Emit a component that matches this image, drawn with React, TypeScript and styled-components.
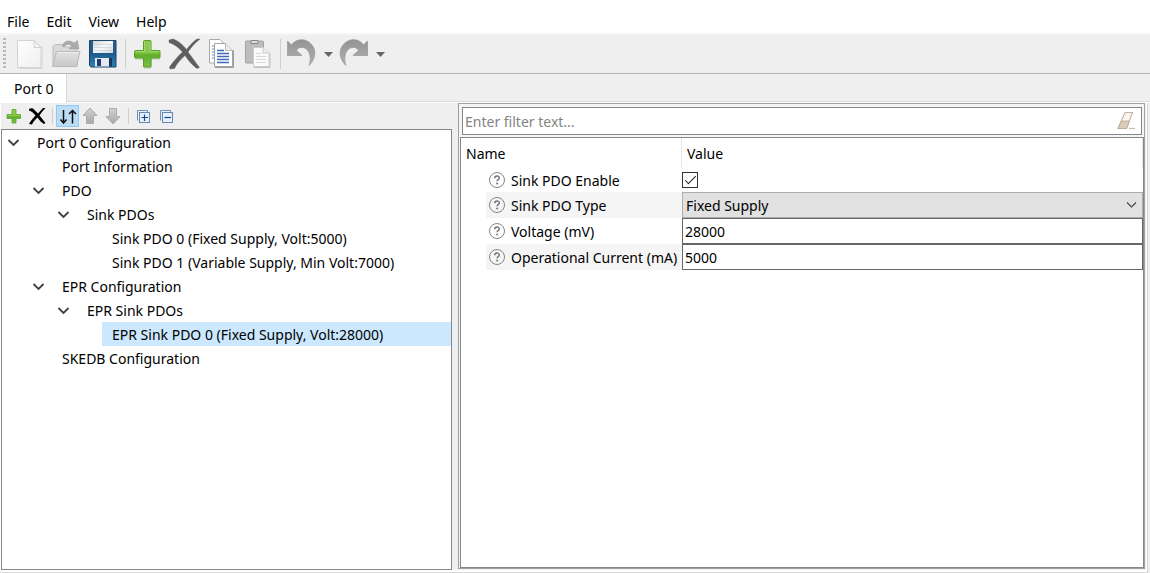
import React, { useState } from "react";
import styled, { createGlobalStyle, css } from "styled-components";

const Global = createGlobalStyle`
  *, *::before, *::after { box-sizing: border-box; }
  body { margin: 0; background: #f0f0f0; }
  body, button, input, select {
    font-family: "Noto Sans", "Open Sans", sans-serif;
    font-size: 14px;
    color: #000;
  }
  button { border: 0; padding: 0; background: none; }
`;

const Window = styled.div`
  display: flex;
  flex-direction: column;
  min-height: 100vh;
  background: #efefef;
`;

const MenuBar = styled.nav`
  display: flex;
  align-items: flex-end;
  height: 35px;
  padding-bottom: 1px;
  background: #fff;
  border-bottom: 2px solid #f6f6f6;
`;

const MenuItem = styled.button`
  height: 20px;
  padding: 0 10px 0 7px;
  line-height: 20px;
`;

const MainToolbar = styled.div`
  display: flex;
  align-items: center;
  height: 39px;
  border-bottom: 1px solid #b4b4b4;
`;

const Grip = styled.div`
  width: 3px;
  height: 32px;
  margin: 0 5px 0 3px;
  background: repeating-linear-gradient(#b9b9b9 0 2px, transparent 2px 4px);
`;

const Separator = styled.div<{ $small?: boolean }>`
  width: 1px;
  height: ${(p) => (p.$small ? 16 : 30)}px;
  margin: 0 3px;
  background: #cfcfcf;
`;

const ToolButton = styled.button<{ $narrow?: boolean }>`
  width: ${(p) => (p.$narrow ? 15 : 37)}px;
  height: 32px;
  svg { display: block; }
`;

const TabStrip = styled.div`
  display: flex;
  height: 29px;
  border-bottom: 1px solid #fff;
  box-shadow: inset 0 -1px #d9d9d9;
`;

const Tab = styled.button`
  height: 29px;
  padding: 0 13px 0 14px;
  background: #fff;
  border-right: 1px solid #d9d9d9;
`;

const Workspace = styled.main`
  display: flex;
  flex: 1;
  gap: 6px;
  margin-right: 2px;
  padding-right: 2px;
  border-right: 1px solid #d9d9d9;
  border-bottom: 1px solid #d9d9d9;
  box-shadow: inset 0 -2px #fff, inset -1px 0 #fff;
`;

const TreePane = styled.section`
  display: flex;
  flex-direction: column;
  flex: 0 1 452px;
  min-width: 200px;
  padding-bottom: 2px;
  border-left: 1px solid #fff;
`;

const TreeToolbar = styled.div`
  display: flex;
  align-items: center;
  height: 26px;
  padding-left: 2px;
`;

const SmallButton = styled.button<{ $active?: boolean }>`
  width: 23px;
  height: 22px;
  svg { display: block; }
  ${(p) => p.$active && css`
    background: #bcdcf4;
    box-shadow: inset 0 0 0 1px #90c8f6;
  `}
`;

const Tree = styled.ul`
  flex: 1;
  margin: 0;
  padding: 0;
  list-style: none;
  background: #fff;
  border: 1px solid #828790;
`;

const TreeRow = styled.li<{ $level: number }>`
  display: flex;
  height: 24px;
  padding-left: ${(p) => p.$level * 25}px;
`;

const Expander = styled.button`
  width: 25px;
  height: 24px;
  flex: none;
  svg { display: block; }
`;

const Leaf = styled.span`
  width: 25px;
  flex: none;
`;

const TreeLabel = styled.button<{ $selected: boolean }>`
  flex: 1;
  min-width: 0;
  padding-left: 10px;
  padding-top: 1px;
  text-align: left;
  white-space: nowrap;
  overflow: hidden;
  background: ${(p) => (p.$selected ? "#cce8ff" : "transparent")};
`;

const DetailPane = styled.section`
  display: flex;
  flex-direction: column;
  flex: 1;
  min-width: 0;
  margin-bottom: 3px;
  padding: 3px 0 0 1px;
  background: #f4f4f4;
  border: 1px solid #a0a0a0;
`;

const FilterBox = styled.div`
  display: flex;
  align-items: center;
  height: 28px;
  margin: 0 2px 2px;
  padding-right: 2px;
  background: #fff;
  border: 1px solid #828790;
`;

const FilterInput = styled.input`
  flex: 1;
  min-width: 0;
  height: 24px;
  padding: 0 2px;
  border: 0;
  outline: 0;
  background: transparent;
  &::placeholder { color: #838383; opacity: 1; }
`;

const ClearButton = styled.button`
  width: 24px;
  height: 24px;
  svg { display: block; }
`;

const PropertyArea = styled.div`
  flex: 1;
  background: #fff;
  border: 1px solid #828790;
`;

const PropertyTable = styled.table`
  width: 100%;
  table-layout: fixed;
  border-collapse: separate;
  border-spacing: 0;
`;

const HeadCell = styled.th`
  height: 30px;
  padding: 0 5px;
  font-weight: 400;
  text-align: left;
  border-right: 1px solid #e5e5e5;
  &:first-child { width: 221px; }
`;

const PropertyRow = styled.tr<{ $short?: boolean }>`
  height: ${(p) => (p.$short ? 24 : 26)}px;
`;

const NameCell = styled.td`
  padding: 0 0 0 25px;
`;

const NameBox = styled.div<{ $shaded?: boolean; $short?: boolean }>`
  display: flex;
  align-items: center;
  gap: 5px;
  height: ${(p) => (p.$short ? 24 : 26)}px;
  padding-left: 2px;
  white-space: nowrap;
  background: ${(p) => (p.$shaded ? "#f5f5f5" : "#fff")};
  svg { flex: none; }
`;

const ValueCell = styled.td`
  padding: 0;
`;

const CheckBox = styled.input`
  display: grid;
  place-items: center;
  appearance: none;
  width: 16px;
  height: 16px;
  margin: 0;
  border: 1px solid #333;
  background: #fff;
  &:checked::after {
    content: "";
    width: 11px;
    height: 5px;
    margin-top: -3px;
    border: solid #222;
    border-width: 0 0 1px 1px;
    transform: rotate(-45deg);
  }
`;

const SelectBox = styled.div`
  display: grid;
  align-items: center;
  > * { grid-area: 1 / 1; }
  svg { justify-self: end; margin-right: 6px; pointer-events: none; }
`;

const Select = styled.select`
  appearance: none;
  width: 100%;
  height: 26px;
  padding: 0 3px;
  border: 1px solid #adadad;
  border-radius: 0;
  background: #e1e1e1;
`;

const ValueInput = styled.input`
  display: block;
  width: 100%;
  height: 26px;
  padding: 0 2px;
  border: 1px solid #666;
  border-radius: 0;
  background: #fff;
`;

const Big = ({ children }: { children: React.ReactNode }) => (
  <svg width="37" height="32" viewBox="0 0 37 32" fill="none">{children}</svg>
);
const Small = ({ children }: { children: React.ReactNode }) => (
  <svg width="23" height="22" viewBox="0 0 23 22" fill="none">{children}</svg>
);

const GradientDefs = styled.svg`
  display: block;
`;

const Gradients = () => (
  <GradientDefs width="0" height="0" aria-hidden="true">
    <defs>
      <linearGradient id="paper" x1="0" y1="0" x2="1" y2="1">
        <stop offset="0" stopColor="#fff" /><stop offset="1" stopColor="#efefef" />
      </linearGradient>
      <linearGradient id="folder" x1="0" y1="0" x2="0" y2="1">
        <stop offset="0" stopColor="#e2e2e2" /><stop offset="1" stopColor="#c8c8c8" />
      </linearGradient>
      <linearGradient id="disk" x1="0" y1="0" x2="0" y2="1">
        <stop offset="0" stopColor="#2b5f8c" /><stop offset=".5" stopColor="#1e5a8c" /><stop offset="1" stopColor="#2d83b8" />
      </linearGradient>
      <linearGradient id="label" x1="0" y1="0" x2="1" y2="1">
        <stop offset="0" stopColor="#cfd5d9" /><stop offset=".5" stopColor="#f6f8f8" /><stop offset="1" stopColor="#d2d8dc" />
      </linearGradient>
      <linearGradient id="green" x1="0" y1="0" x2="0" y2="1">
        <stop offset="0" stopColor="#8ecb52" /><stop offset=".45" stopColor="#86c648" /><stop offset=".55" stopColor="#5fae2c" /><stop offset="1" stopColor="#7cc142" />
      </linearGradient>
      <linearGradient id="grey" x1="0" y1="0" x2="0" y2="1">
        <stop offset="0" stopColor="#949494" /><stop offset="1" stopColor="#b2b2b2" />
      </linearGradient>
      <linearGradient id="arrow" x1="0" y1="0" x2="0" y2="1">
        <stop offset="0" stopColor="#d2d2d2" /><stop offset="1" stopColor="#a8a8a8" />
      </linearGradient>
    </defs>
  </GradientDefs>
);

const NewIcon = () => (
  <Big>
    <path d="M8 30.500H31V9" stroke="#d8d8d8" />
    <path d="M6.500 2.500H23L30 9.500V29.500H6.500Z" fill="url(#paper)" stroke="#d2d2d2" />
    <path d="M23 2.500V9.500H30Z" fill="#f4f4f4" stroke="#cfcfcf" />
  </Big>
);
const OpenIcon = () => (
  <Big>
    <path d="M5 28V8.500L7 6.500H14L16 9H29V28Z" fill="#dadada" stroke="#bcbcbc" />
    <path d="M14 8C16 2.500 22 1.500 26 5L29.500 2.500L31 11H21L24 8C21 5.500 18 6 16 9Z" fill="#ababab" stroke="#9c9c9c" strokeWidth=".5" />
    <path d="M4.500 28.500L8.500 13.500H32L28.500 28.500Z" fill="url(#folder)" stroke="#bababa" />
    <path d="M9.500 14.500H31" stroke="#eee" />
  </Big>
);
const SaveIcon = () => (
  <Big>
    <path d="M4.500 2.500H31V29H6L4.500 27.500Z" fill="url(#disk)" stroke="#1c456c" />
    <path d="M8 3H28V15H8Z" fill="url(#label)" />
    <path d="M9 6.500H27M9 9.500H27M9 12.500H27" stroke="#c8cfd3" strokeWidth=".7" />
    <path d="M10 20H24V28.500H10Z" fill="#e4e9ee" />
    <path d="M12 21H16V28H12Z" fill="#1d3d78" />
    <path d="M24 20H27V28.500H24Z" fill="#16375d" />
  </Big>
);
const AddIcon = () => (
  <Big>
    <path d="M6 21H15V30H22V21H31" stroke="#c3c3c3" />
    <path d="M14.500 3.500Q14.500 2.500 15.500 2.500H21Q22 2.500 22 3.500V12.500H30Q31 12.500 31 13.500V19Q31 20 30 20H22V28Q22 29 21 29H15.500Q14.500 29 14.500 28V20H6.500Q5.500 20 5.500 19V13.500Q5.500 12.500 6.500 12.500H14.500Z" fill="url(#green)" stroke="#52a022" />
    <path d="M15.500 13.500V4M21 4V13.500H29.500M7 13.500H15" stroke="#a9da78" strokeWidth=".8" />
  </Big>
);
const DeleteIcon = () => (
  <Big>
    <path d="M3 2L7 1C12 2.500 17 7 20.500 11.500C24 7 28 3 31 1H34C29 5 25 9.500 22 14C26 19 30 25 33.500 29.500L31 30.500C26 27 22 22 19 17.500C14 22 10.500 26 8.500 30.500L4 31L3.500 29C7 24 12 18 16.500 14C12 9 8 6 3 4.500Z" fill="#5e5e5e" stroke="#5e5e5e" strokeWidth=".4" />
  </Big>
);
const CopyIcon = () => (
  <Big>
    <path d="M6.500 1.500H17L22 6.500V25H6.500Z" fill="#fff" stroke="#aaa" />
    <path d="M9 8H12M9 11H12M9 14H12M9 17H12M9 20H12" stroke="#6788cc" />
    <path d="M12 29.500H30.500V12" stroke="#9d9d9d" />
    <path d="M11.500 5.500H22.500L29.500 12.500V28.500H11.500Z" fill="#fff" stroke="#a4a4a4" />
    <path d="M22.500 5.500V12.500H29.500" fill="#eee" stroke="#bbb" />
    <path d="M14 12.500H21M14 15.500H26M14 18.500H26M14 21.500H26M14 24.500H26" stroke="#4168bb" strokeWidth="1.300" />
  </Big>
);
const PasteIcon = () => (
  <Big>
    <rect x="5.500" y="3" width="18" height="22" rx="1" fill="#bdbdbd" stroke="#a3a3a3" />
    <path d="M11 2.500H18V5.500H11Z" fill="#ddd" stroke="#888" />
    <path d="M14 29.500H30V15" stroke="#c2c2c2" />
    <path d="M13.500 9.500H23L29 15V28.500H13.500Z" fill="#fafafa" stroke="#cacaca" />
    <path d="M23 9.500V15H29" fill="#eee" stroke="#ccc" />
    <path d="M16 15.500H21M16 18.500H26M16 21.500H26M16 24.500H26" stroke="#d8d8d8" />
  </Big>
);
const UNDO = "M4.500 3L8.500 7C12 1.500 19 .500 24 3C34 8 34 20 26 27.500C29 20 26.500 10.500 20 9.500C17 9 14.500 10 13.500 12.500L19 17.500H4.500Z";
const UndoIcon = () => (
  <Big><path transform="translate(-1 0)" d={UNDO} fill="url(#grey)" stroke="#939393" strokeWidth=".7" /></Big>
);
const RedoIcon = () => (
  <Big><path transform="translate(36 0) scale(-1 1)" d={UNDO} fill="url(#grey)" stroke="#939393" strokeWidth=".7" /></Big>
);
const DropIcon = () => (
  <svg width="15" height="32" viewBox="0 0 15 32"><path d="M3 14H12L7.500 19Z" fill="#666" /></svg>
);

const SmallAdd = () => (
  <Small><path d="M9 4.500H13V9.500H17.500V13.500H13V18H9V13.500H4V9.500H9Z" fill="url(#green)" stroke="#5ba62b" strokeWidth=".8" /></Small>
);
const SmallDelete = () => (
  <Small><path d="M3 4L6 3C8 4 10 6.500 12 8.500L17 3H19.500C17 5.500 15 8 13.500 10.500L19.500 18L18 19C15.500 17.500 13 15 11.500 12.500C9 15 7 17 6 19.500L3 19C5 15.500 7 13 9.500 10.500C7.500 8 5.500 6 3 5.500Z" fill="#000" /></Small>
);
const SortIcon = () => (
  <Small><path d="M7.500 5V18M4.500 14.500L7.500 18L10.500 14.500M16.500 18.500V6M13 9L16.500 5.500L20 9" stroke="#111" strokeWidth="1.500" /></Small>
);
const UpIcon = () => (
  <Small><path d="M11 3L18 10.500H14.500V18.500H7.500V10.500H4Z" fill="url(#arrow)" stroke="#acacac" /></Small>
);
const DownIcon = () => (
  <Small><path d="M11 19L18 11.500H14.500V3.500H7.500V11.500H4Z" fill="url(#arrow)" stroke="#acacac" /></Small>
);
const TreeBox = ({ plus }: { plus?: boolean }) => (
  <Small>
    <path d="M5.500 15.500V5.500H15.500V7" fill="#e5f0fb" stroke="#7191b8" />
    <rect x="7.500" y="7.500" width="10" height="10" fill="#e5f0fb" stroke="#6687af" />
    <path d={plus ? "M9.500 12.500H16M12.500 9.500V16" : "M9.500 12.500H16"} stroke="#12488f" strokeWidth="1.200" />
  </Small>
);
const Chevron = () => (
  <svg width="25" height="24" viewBox="0 0 25 24" fill="none">
    <path d="M6.500 10L11.500 15L16.500 10" stroke="#404040" strokeWidth="1.800" />
  </svg>
);
const HelpIcon = () => (
  <svg width="18" height="18" viewBox="0 0 18 18" fill="none">
    <circle cx="9" cy="9" r="7.500" stroke="#858585" />
    <path d="M6.700 7.200C6.700 4.200 11.400 4.300 11.300 7C11.200 8.700 9.100 8.500 9.100 10.300" stroke="#777" strokeWidth="1.500" />
    <circle cx="9.100" cy="12.600" r="1" fill="#777" />
  </svg>
);
const EraserIcon = () => (
  <svg width="24" height="24" viewBox="0 0 24 24" fill="none">
    <path d="M10 3.500H17.500L11.500 19.500H3Z" fill="#faf7f3" stroke="#c4b5a3" strokeWidth="1.200" />
    <path d="M6.500 12H14.500L11.500 19.500H3Z" fill="#dccbb9" stroke="#b8a793" strokeWidth=".8" />
    <path d="M14 19.500H20" stroke="#c8baa8" strokeWidth="1.200" />
  </svg>
);

const nodes = [
  { level: 0, text: "Port 0 Configuration", open: true },
  { level: 1, text: "Port Information" },
  { level: 1, text: "PDO", open: true },
  { level: 2, text: "Sink PDOs", open: true },
  { level: 3, text: "Sink PDO 0 (Fixed Supply, Volt:5000)" },
  { level: 3, text: "Sink PDO 1 (Variable Supply, Min Volt:7000)" },
  { level: 1, text: "EPR Configuration", open: true },
  { level: 2, text: "EPR Sink PDOs", open: true },
  { level: 3, text: "EPR Sink PDO 0 (Fixed Supply, Volt:28000)" },
  { level: 1, text: "SKEDB Configuration" },
];

export default function App() {
  const [selected, setSelected] = useState(8);
  return (
    <>
      <Global />
      <Gradients />
      <Window>
        <MenuBar>
          {["File", "Edit", "View", "Help"].map((m) => <MenuItem key={m}>{m}</MenuItem>)}
        </MenuBar>
        <MainToolbar role="toolbar">
          <Grip />
          <ToolButton aria-label="New"><NewIcon /></ToolButton>
          <ToolButton aria-label="Open"><OpenIcon /></ToolButton>
          <ToolButton aria-label="Save"><SaveIcon /></ToolButton>
          <Separator />
          <ToolButton aria-label="Add"><AddIcon /></ToolButton>
          <ToolButton aria-label="Delete"><DeleteIcon /></ToolButton>
          <ToolButton aria-label="Copy"><CopyIcon /></ToolButton>
          <ToolButton aria-label="Paste"><PasteIcon /></ToolButton>
          <Separator />
          <ToolButton aria-label="Undo"><UndoIcon /></ToolButton>
          <ToolButton $narrow aria-label="Undo history"><DropIcon /></ToolButton>
          <ToolButton aria-label="Redo"><RedoIcon /></ToolButton>
          <ToolButton $narrow aria-label="Redo history"><DropIcon /></ToolButton>
        </MainToolbar>
        <TabStrip role="tablist">
          <Tab role="tab" aria-selected="true">Port 0</Tab>
        </TabStrip>
        <Workspace>
          <TreePane>
            <TreeToolbar role="toolbar">
              <SmallButton aria-label="Add item"><SmallAdd /></SmallButton>
              <SmallButton aria-label="Remove item"><SmallDelete /></SmallButton>
              <Separator $small />
              <SmallButton $active aria-label="Sort"><SortIcon /></SmallButton>
              <SmallButton aria-label="Move up"><UpIcon /></SmallButton>
              <SmallButton aria-label="Move down"><DownIcon /></SmallButton>
              <Separator $small />
              <SmallButton aria-label="Expand all"><TreeBox plus /></SmallButton>
              <SmallButton aria-label="Collapse all"><TreeBox /></SmallButton>
            </TreeToolbar>
            <Tree>
              {nodes.map((n, i) => (
                <TreeRow key={n.text} $level={n.level}>
                  {n.open ? <Expander aria-label={"Collapse " + n.text}><Chevron /></Expander> : <Leaf />}
                  <TreeLabel $selected={i === selected} onClick={() => setSelected(i)}>{n.text}</TreeLabel>
                </TreeRow>
              ))}
            </Tree>
          </TreePane>
          <DetailPane>
            <FilterBox>
              <FilterInput aria-label="Filter" placeholder="Enter filter text..." />
              <ClearButton aria-label="Clear filter"><EraserIcon /></ClearButton>
            </FilterBox>
            <PropertyArea>
              <PropertyTable>
                <thead>
                  <tr><HeadCell>Name</HeadCell><HeadCell>Value</HeadCell></tr>
                </thead>
                <tbody>
                  <PropertyRow $short>
                    <NameCell><NameBox $short><HelpIcon /><label htmlFor="enable">Sink PDO Enable</label></NameBox></NameCell>
                    <ValueCell><CheckBox id="enable" type="checkbox" defaultChecked /></ValueCell>
                  </PropertyRow>
                  <PropertyRow>
                    <NameCell><NameBox $shaded><HelpIcon /><label htmlFor="type">Sink PDO Type</label></NameBox></NameCell>
                    <ValueCell>
                      <SelectBox>
                        <Select id="type"><option>Fixed Supply</option></Select>
                        <svg width="11" height="8" viewBox="0 0 11 8" fill="none">
                          <path d="M1 1.500L5.500 6L10 1.500" stroke="#444" strokeWidth="1.100" />
                        </svg>
                      </SelectBox>
                    </ValueCell>
                  </PropertyRow>
                  <PropertyRow>
                    <NameCell><NameBox><HelpIcon /><label htmlFor="voltage">Voltage (mV)</label></NameBox></NameCell>
                    <ValueCell><ValueInput id="voltage" defaultValue="28000" /></ValueCell>
                  </PropertyRow>
                  <PropertyRow>
                    <NameCell><NameBox $shaded><HelpIcon /><label htmlFor="current">Operational Current (mA)</label></NameBox></NameCell>
                    <ValueCell><ValueInput id="current" defaultValue="5000" /></ValueCell>
                  </PropertyRow>
                </tbody>
              </PropertyTable>
            </PropertyArea>
          </DetailPane>
        </Workspace>
      </Window>
    </>
  );
}
